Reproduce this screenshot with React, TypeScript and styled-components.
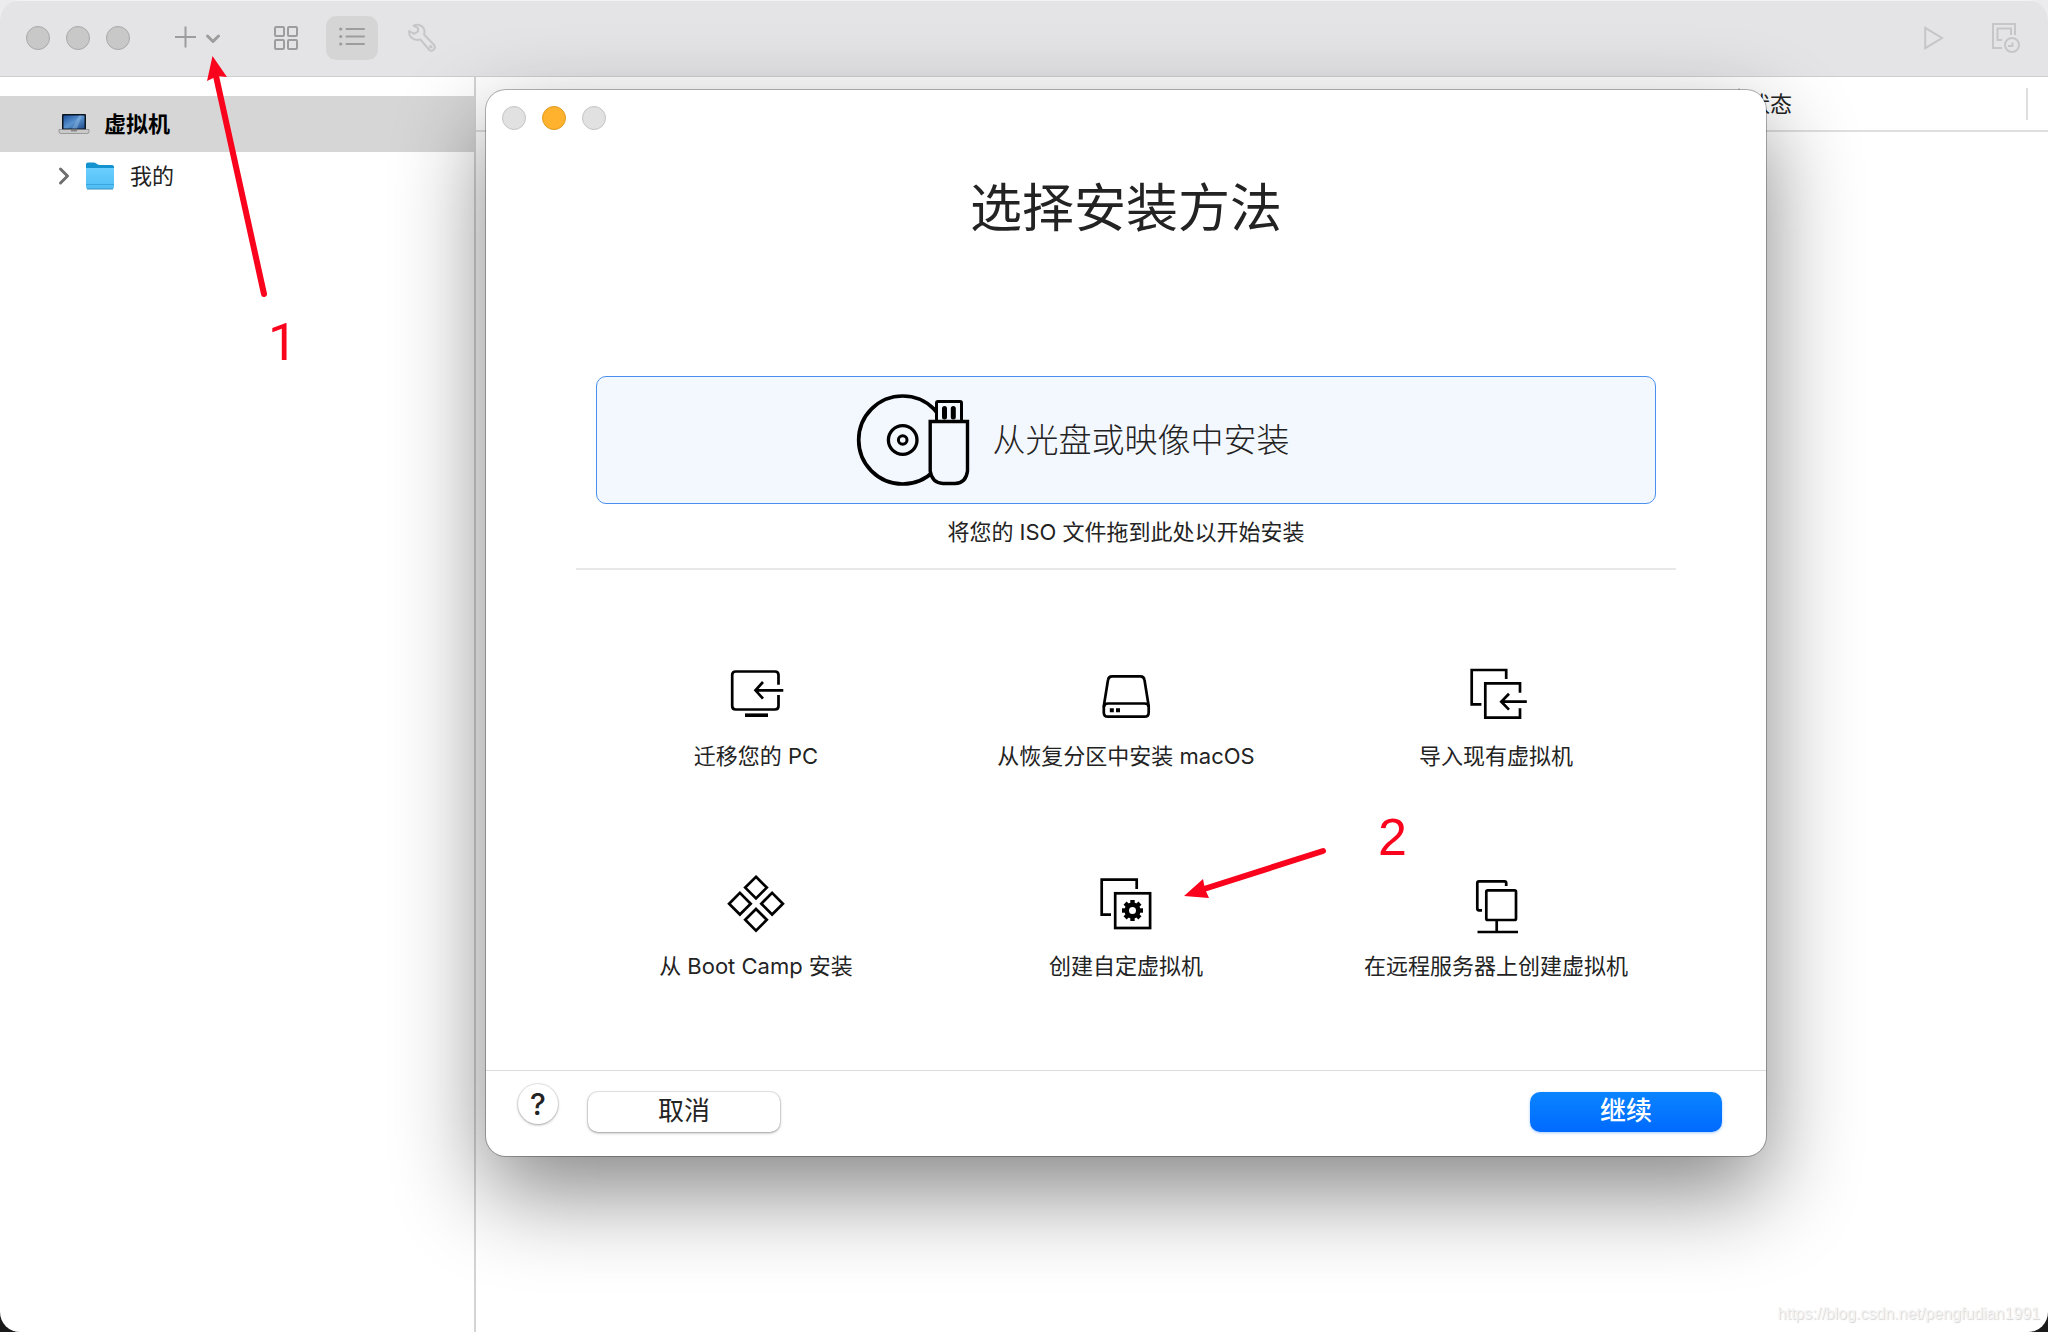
import React from "react";
import styled, { createGlobalStyle, css } from "styled-components";

const sans = `Inter, "Noto Sans CJK SC", sans-serif`;

const GlobalStyle = createGlobalStyle`
  * { box-sizing: border-box; }
  html { background: linear-gradient(#ececee 0 50%, #1b1b1b 50% 100%); min-height: 100%; }
  body { margin: 0; font-family: ${sans}; color: #232323; }
  button { font-family: inherit; color: inherit; border: 0; background: none; padding: 0; }
  svg { display: block; overflow: visible; }
`;

const Desktop = styled.div`
  position: relative;
  display: flex;
  flex-direction: column;
  min-height: 100vh;
  border-radius: 20px;
  overflow: hidden;
  background: #fff;
`;

const Toolbar = styled.header`
  display: flex;
  align-items: center;
  height: 77px;
  padding: 0 28px 1px 26px;
  background: #e4e4e6;
  border-top: 1px solid #f2f2f3;
  border-bottom: 1px solid #cfcfd0;
`;

const Lights = styled.div`
  display: flex;
  gap: 16px;
`;

const Light = styled.button<{ $tone: "dim" | "pale" | "amber" }>`
  width: 24px;
  height: 24px;
  border-radius: 50%;
  border: 1px solid;
  ${(p) => p.$tone === "dim" && css`background: #c8c8c8; border-color: #a9a9a9;`}
  ${(p) => p.$tone === "pale" && css`background: #e1e1e1; border-color: #c4c4c4;`}
  ${(p) => p.$tone === "amber" && css`background: #feb22d; border-color: #e09a1f;`}
`;

const ToolGroup = styled.div`
  display: flex;
  align-items: center;
  gap: 14px;
  flex: 1;
  margin-left: 42px;
`;

const ToolButton = styled.button<{ $active?: boolean; $faint?: boolean }>`
  display: flex;
  align-items: center;
  justify-content: center;
  width: ${(p) => (p.$faint ? 60 : 52)}px;
  height: 44px;
  border-radius: 10px;
  background: ${(p) => (p.$active ? "#d5d5d6" : "transparent")};
  color: ${(p) => (p.$faint ? "#c6c6c8" : "#9d9d9e")};
`;

const AddButton = styled(ToolButton)`
  margin-right: 22px;
`;

const ToolEnd = styled.div`
  display: flex;
  gap: 48px;
`;

const EndButton = styled.button`
  display: flex;
  align-items: center;
  color: #c6c6c8;
`;

const Panes = styled.div`
  display: flex;
  flex: 1;
`;

const Sidebar = styled.nav`
  width: 476px;
  flex: none;
  padding-top: 19px;
  border-right: 2px solid #d4d4d4;
`;

const TreeRow = styled.button<{ $selected?: boolean }>`
  display: flex;
  align-items: center;
  width: 100%;
  height: ${(p) => (p.$selected ? 56 : 48)}px;
  padding-left: 59px;
  gap: 15px;
  font-size: 22px;
  line-height: 32px;
  font-weight: ${(p) => (p.$selected ? 700 : 400)};
  color: ${(p) => (p.$selected ? "#000" : "#232323")};
  background: ${(p) => (p.$selected ? "#d6d6d6" : "transparent")};
`;

const ListPane = styled.main`
  flex: 1;
`;

const ColumnBar = styled.div`
  display: flex;
  align-items: center;
  height: 55px;
  padding-right: 20px;
  border-bottom: 2px solid #dfdfdf;
`;

const Column = styled.div<{ $grow?: boolean }>`
  flex: ${(p) => (p.$grow ? "1" : "0 0 288px")};
  height: 32px;
  padding-left: 8px;
  border-right: 2px solid #dfdfdf;
  font-size: 22px;
  line-height: 32px;
`;

const Dialog = styled.section`
  position: absolute;
  left: 486px;
  top: 90px;
  width: 1280px;
  border-radius: 20px;
  background: #fff;
  box-shadow: 0 0 0 1px rgba(0, 0, 0, 0.28), 0 36px 92px rgba(0, 0, 0, 0.48);
`;

const DialogBar = styled.div`
  padding: 16px;
`;

const DialogBody = styled.div`
  display: flex;
  flex-direction: column;
  align-items: center;
  padding: 30px 85px 88px;
`;

const Title = styled.h1`
  margin: 0 0 134px;
  font-size: 52px;
  line-height: 66px;
  font-weight: 400;
`;

const DropZone = styled.button`
  display: flex;
  align-items: center;
  justify-content: center;
  gap: 21px;
  width: 1060px;
  height: 128px;
  padding-right: 107px;
  border: 1px solid #4a8ff0;
  border-radius: 10px;
  background: #f3f7fe;
  font-size: 33px;
  line-height: 48px;
  font-weight: 300;
`;

const Hint = styled.p`
  margin: 12px 0 20px;
  font-size: 22px;
  line-height: 32px;
`;

const Rule = styled.hr`
  width: 1100px;
  margin: 0;
  border: 0;
  border-top: 2px solid #e8e8e8;
`;

const Options = styled.div`
  display: grid;
  grid-template-columns: repeat(3, 370px);
  row-gap: 103px;
  margin-top: 95px;
`;

const Option = styled.button`
  display: flex;
  flex-direction: column;
  align-items: center;
  gap: 15px;
  font-size: 22px;
  line-height: 32px;
  white-space: nowrap;
`;

const Footer = styled.footer`
  display: flex;
  align-items: flex-end;
  height: 86px;
  padding: 13px 44px 24px 32px;
  border-top: 1px solid #dcdcdc;
`;

const HelpButton = styled.button`
  align-self: flex-start;
  width: 40px;
  height: 40px;
  margin-right: 30px;
  border-radius: 50%;
  font-size: 30px;
  line-height: 40px;
  font-weight: 500;
  box-shadow: 0 0 0 1px rgba(0, 0, 0, 0.08), 0 1px 3px rgba(0, 0, 0, 0.3);
`;

const PushButton = styled.button<{ $primary?: boolean }>`
  width: 192px;
  height: 40px;
  padding-bottom: 2px;
  border-radius: 10px;
  font-size: 26px;
  line-height: 38px;
  font-weight: ${(p) => (p.$primary ? 500 : 400)};
  ${(p) =>
    p.$primary
      ? css`
          margin-left: auto;
          color: #fff;
          background: linear-gradient(#0a84ff, #006aff);
          box-shadow: 0 1px 3px rgba(0, 106, 255, 0.35);
        `
      : css`
          background: #fff;
          box-shadow: 0 0 0 1px rgba(0, 0, 0, 0.08), 0 1px 3px rgba(0, 0, 0, 0.35);
        `}
`;

const Overlay = styled.svg`
  position: absolute;
  left: 0;
  top: 0;
  pointer-events: none;
`;

const Mark = styled.span<{ $x: number; $y: number; $font: string }>`
  position: absolute;
  left: ${(p) => p.$x}px;
  top: ${(p) => p.$y}px;
  font-family: ${(p) => p.$font}, sans-serif;
  font-size: 52px;
  line-height: 60px;
  color: #f9041c;
`;

const Watermark = styled.span`
  position: absolute;
  right: 8px;
  bottom: 6px;
  font-family: "Liberation Sans", sans-serif;
  font-size: 16px;
  line-height: 24px;
  color: #f4f4f4;
  text-shadow: 1px 1px 1px #d4d4d4;
`;

const line = { fill: "none", stroke: "#000", strokeWidth: 2.7 } as const;
const thin = { fill: "none", stroke: "currentColor" } as const;

const AddIcon = () => (
  <svg width="46" height="22" viewBox="0 0 46 22" {...thin}>
    <path d="M0 10H21M10.5 -.5V20.5" strokeWidth="2" />
    <path d="M32.5 9L38 14.500L43.5 9" strokeWidth="3" strokeLinecap="round" strokeLinejoin="round" />
  </svg>
);

const GridIcon = () => (
  <svg width="24" height="24" viewBox="0 0 24 24" {...thin} strokeWidth="2">
    <rect x="1" y="1" width="9" height="9" rx="1" />
    <rect x="14" y="1" width="9" height="9" rx="1" />
    <rect x="1" y="14" width="9" height="9" rx="1" />
    <rect x="14" y="14" width="9" height="9" rx="1" />
  </svg>
);

const ListIcon = () => (
  <svg width="26" height="22" viewBox="0 0 26 22" {...thin} strokeWidth="2" strokeLinecap="round">
    <path d="M7.5 2H25M7.5 9.5H25M7.5 17H25" />
    <path d="M1.7 2h.1M1.7 9.5h.1M1.7 17h.1" strokeWidth="3.2" />
  </svg>
);

const WrenchIcon = () => (
  <svg width="28" height="28" viewBox="0 0 28 28" {...thin} strokeWidth="2" strokeLinejoin="round">
    <path d="M5.5 1.6C9 .2 13.500 .7 15.600 4C17 6.400 16.800 8.500 16.200 10.800L26 20.800C28.400 23.800 25 28.400 21.400 26L12.300 15.400C9.500 16.200 6.500 16.200 4 14C1.700 12 .7 9.600 1.200 7L6 9.800L10 7.400L10 4.200Z" />
    <circle cx="22.800" cy="22.800" r=".8" />
  </svg>
);

const PlayIcon = () => (
  <svg width="20" height="24" viewBox="0 0 20 24" {...thin} strokeWidth="2">
    <path d="M1.200 1.800V22.200L18 12Z" />
  </svg>
);

const SnapshotIcon = () => (
  <svg width="28" height="30" viewBox="0 0 28 30" {...thin} strokeWidth="2">
    <path d="M10 25H1V1H23V12" />
    <path d="M10 17H5.500V5.500H19V12" />
    <circle cx="20" cy="22" r="7" />
    <path d="M20.500 19.500V23H16" />
  </svg>
);

const LaptopIcon = () => (
  <svg width="30" height="20" viewBox="0 0 30 20">
    <defs>
      <linearGradient id="screen" x1="0" y1="0" x2="1" y2="1">
        <stop offset="0" stopColor="#1c4f9c" />
        <stop offset=".5" stopColor="#5a94cf" />
        <stop offset="1" stopColor="#1f4c8c" />
      </linearGradient>
    </defs>
    <rect x="3" y="0" width="24" height="16" rx="1" fill="#0c1420" />
    <rect x="4.500" y="1.500" width="21" height="13" fill="url(#screen)" />
    <path d="M13 14.500L20 1.500H23L18 14.500Z" fill="#9cc4ea" opacity=".4" />
    <path d="M0 15.500H30V18Q30 19.500 28 19.500H2Q0 19.500 0 18Z" fill="#c9c9c9" stroke="#777" strokeWidth=".6" />
    <path d="M12 16.800H18" stroke="#666" />
  </svg>
);

const DisclosureIcon = () => (
  <svg width="11" height="16" viewBox="0 0 11 16" fill="none" stroke="#6e6e6e" strokeWidth="3">
    <path d="M1.500 1L8.500 8L1.500 15" strokeLinecap="round" strokeLinejoin="round" />
  </svg>
);

const FolderIcon = () => (
  <svg width="30" height="28" viewBox="0 0 30 28">
    <defs>
      <linearGradient id="folder" x1="0" y1="0" x2="0" y2="1">
        <stop offset="0" stopColor="#6bcfff" />
        <stop offset="1" stopColor="#4fbdf3" />
      </linearGradient>
    </defs>
    <path d="M1 2Q1 .5 3 .5H9Q10.500 .5 12 2Q13 3 15 3H27Q29 3 29 5V12H1Z" fill="#1491cf" />
    <path d="M1 6H29V25Q29 27 27 27H3Q1 27 1 25Z" fill="url(#folder)" />
    <path d="M1 22.500H29" stroke="#3aa6de" strokeWidth="1" />
    <path d="M2 27H28" stroke="#3592c4" strokeWidth="1" />
  </svg>
);

const DiscIcon = () => (
  <svg width="116" height="96" viewBox="0 0 116 96" fill="none" stroke="#000">
    <circle cx="46.700" cy="48" r="44" strokeWidth="3.700" />
    <circle cx="46.700" cy="48" r="14.300" strokeWidth="3.300" />
    <circle cx="46.700" cy="48" r="4.300" strokeWidth="3" />
    <path d="M80.500 30V11Q80.500 9.500 82 9.500H104Q105.500 9.500 105.500 11V30" fill="#f3f7fe" strokeWidth="3" />
    <path d="M74.200 29.500H111.500V79Q110 91 99 91.500H87Q76 91 74.200 79Z" fill="#f3f7fe" strokeWidth="3.400" />
    <path d="M88.500 16.500V25M97.300 16.500V25" strokeWidth="5" strokeLinecap="round" />
  </svg>
);

const OptionSvg = ({ children }: { children: React.ReactNode }) => (
  <svg width="60" height="60" viewBox="0 0 60 60" {...line}>{children}</svg>
);

const PcIcon = () => (
  <OptionSvg>
    <path d="M52.500 19.700V10Q52.500 6.500 49 6.500H9.700Q6.200 6.500 6.200 10V41Q6.200 44.500 9.700 44.500H49Q52.500 44.500 52.500 41V30" />
    <path d="M57.300 25.300H30M37 17L29.500 25.300L37 33.600" />
    <path d="M19 50.200H42" strokeWidth="3.600" />
  </OptionSvg>
);

const DiskIcon = () => (
  <OptionSvg>
    <path d="M12 15Q12.500 11.300 16 11.300H44.500Q48 11.300 48.500 15L52.700 41V47.500Q52.700 51.700 48.500 51.700H12Q7.800 51.700 7.800 47.500V41Z" />
    <path d="M8 42Q8 38.500 12 38.500H48.500Q52.500 38.500 52.700 42" />
    <path d="M13.800 45.300H17.800M20 45.300H24" strokeWidth="4" />
  </OptionSvg>
);

const ImportIcon = () => (
  <OptionSvg>
    <path d="M40.200 14V5H5.700V39.300H15.400" />
    <path d="M54 27.700V18.300H19.300V52.700H54V43.300" />
    <path d="M60.800 36.700H35.500M43 28.800L35.300 36.700L43 44.600" />
  </OptionSvg>
);

const BootCampIcon = () => (
  <OptionSvg>
    {[[30, 12.6], [13.900, 28.700], [46.100, 28.700], [30, 44.800]].map(([x, y]) => (
      <path key={`${x}-${y}`} d={`M${x} ${y - 10.800}L${x + 10.800} ${y}L${x} ${y + 10.800}L${x - 10.800} ${y}Z`} />
    ))}
  </OptionSvg>
);

const CustomIcon = () => (
  <OptionSvg>
    <path d="M40.700 14V4.700H5.700V39.700H15" />
    <rect x="19.200" y="18.300" width="34.900" height="34.700" />
    <circle cx="36.500" cy="35.500" r="5.800" strokeWidth="4.600" />
    {[0, 45, 90, 135, 180, 225, 270, 315].map((a) => (
      <path key={a} d="M36.500 28.500V25" strokeWidth="4.400" transform={`rotate(${a} 36.500 35.500)`} />
    ))}
  </OptionSvg>
);

const RemoteIcon = () => (
  <OptionSvg>
    <path d="M40.200 11V8Q40.200 6.300 38.500 6.300H13Q11.300 6.300 11.300 8V33.500Q11.300 35.300 13 35.300H16" />
    <rect x="20.300" y="15.300" width="29.700" height="29.700" rx="1.500" />
    <path d="M30.700 46V57M11.500 57H52" />
  </OptionSvg>
);

const options = [
  { label: "迁移您的 PC", Icon: PcIcon },
  { label: "从恢复分区中安装 macOS", Icon: DiskIcon },
  { label: "导入现有虚拟机", Icon: ImportIcon },
  { label: "从 Boot Camp 安装", Icon: BootCampIcon },
  { label: "创建自定虚拟机", Icon: CustomIcon },
  { label: "在远程服务器上创建虚拟机", Icon: RemoteIcon },
];

export default function App() {
  return (
    <>
      <GlobalStyle />
      <Desktop>
        <Toolbar>
          <Lights>
            <Light $tone="dim" aria-label="关闭" />
            <Light $tone="dim" aria-label="最小化" />
            <Light $tone="dim" aria-label="缩放" />
          </Lights>
          <ToolGroup>
            <AddButton aria-label="新建"><AddIcon /></AddButton>
            <ToolButton aria-label="图标视图"><GridIcon /></ToolButton>
            <ToolButton $active aria-label="列表视图"><ListIcon /></ToolButton>
            <ToolButton $faint aria-label="设置"><WrenchIcon /></ToolButton>
          </ToolGroup>
          <ToolEnd>
            <EndButton aria-label="启动"><PlayIcon /></EndButton>
            <EndButton aria-label="快照"><SnapshotIcon /></EndButton>
          </ToolEnd>
        </Toolbar>
        <Panes>
          <Sidebar>
            <TreeRow $selected><LaptopIcon />虚拟机</TreeRow>
            <TreeRow><DisclosureIcon /><FolderIcon />我的</TreeRow>
          </Sidebar>
          <ListPane>
            <ColumnBar>
              <Column $grow />
              <Column>状态</Column>
            </ColumnBar>
          </ListPane>
        </Panes>

        <Dialog role="dialog" aria-labelledby="dialog-title">
          <DialogBar>
            <Lights>
              <Light $tone="pale" aria-label="关闭" />
              <Light $tone="amber" aria-label="最小化" />
              <Light $tone="pale" aria-label="缩放" />
            </Lights>
          </DialogBar>
          <DialogBody>
            <Title id="dialog-title">选择安装方法</Title>
            <DropZone><DiscIcon />从光盘或映像中安装</DropZone>
            <Hint>将您的 ISO 文件拖到此处以开始安装</Hint>
            <Rule />
            <Options>
              {options.map(({ label, Icon }) => (
                <Option key={label}><Icon />{label}</Option>
              ))}
            </Options>
          </DialogBody>
          <Footer>
            <HelpButton aria-label="帮助">?</HelpButton>
            <PushButton>取消</PushButton>
            <PushButton $primary>继续</PushButton>
          </Footer>
        </Dialog>

        <Overlay width="1400" height="960" aria-hidden="true" fill="#f9041c" stroke="#f9041c">
          <path d="M264 294L216 76" strokeWidth="6" strokeLinecap="round" />
          <path d="M212.500 56L227 77L217.500 76L207 81Z" stroke="none" />
          <path d="M1323 851L1204 889" strokeWidth="6" strokeLinecap="round" />
          <path d="M1184 896L1203 879L1205 889L1209 898Z" stroke="none" />
        </Overlay>
        <Mark $x={268} $y={313} $font="Roboto">1</Mark>
        <Mark $x={1378} $y={807} $font='"Liberation Sans"'>2</Mark>
        <Watermark>https://blog.csdn.net/pengfudian1991</Watermark>
      </Desktop>
    </>
  );
}
